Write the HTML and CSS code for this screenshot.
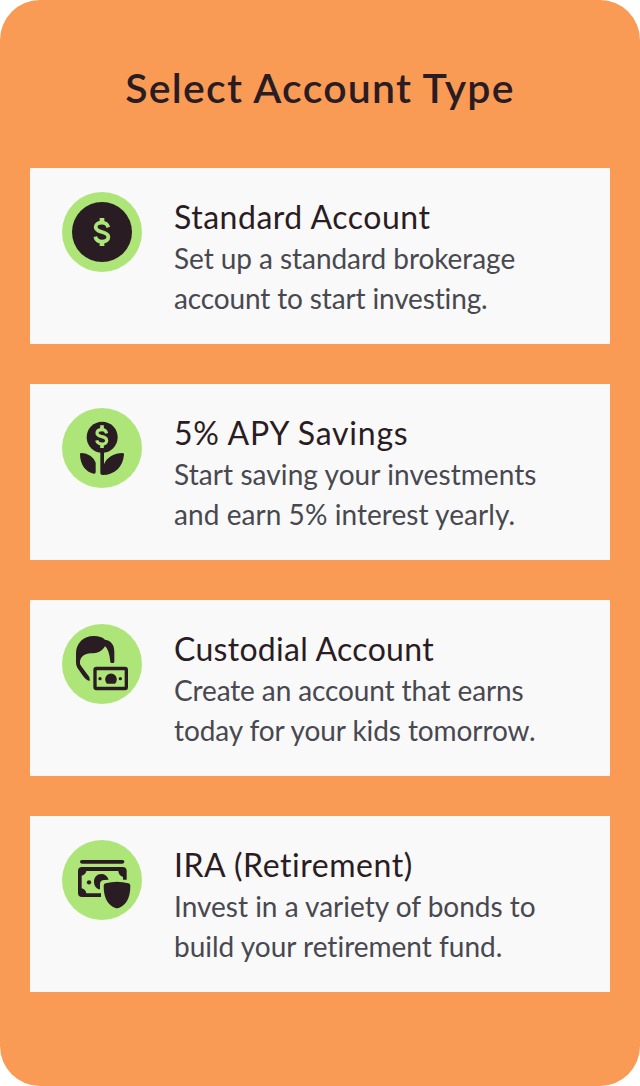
FILE: index.html
```html
<!DOCTYPE html>
<html lang="en">
<head>
<meta charset="utf-8">
<title>Select Account Type</title>
<link rel="stylesheet" href="styles.css">
</head>
<body>
<main class="panel">
  <h1 class="title">Select Account Type</h1>
  <div class="cards">
    <section class="card">
      <svg class="icon" viewBox="30 30 240 240" aria-hidden="true">
        <circle class="lime" cx="150" cy="150" r="120"/>
        <circle class="ink" cx="150" cy="150" r="90"/>
        <g class="line-lime">
          <path stroke-width="11.500" d="M169 136C166 126 160 122 150 122C139 122 131 127 131 135C131 144 139 147 150 150C162 153 169 156 169 165C169 174 161 179 150 179C139 179 132 174 130 164"/>
          <path stroke-width="14" d="M150 108V124M150 177V192"/>
        </g>
      </svg>
      <div class="copy">
        <h2 class="name n1">Standard Account</h2>
        <p class="text"><span class="a1">Set up a standard brokerage</span><br><span class="a2">account to start investing.</span></p>
      </div>
    </section>
    <section class="card">
      <svg class="icon" viewBox="30 30 240 240" aria-hidden="true">
        <circle class="lime" cx="150" cy="150" r="120"/>
        <circle class="ink" cx="150.500" cy="118" r="46.500"/>
        <path class="ink" d="M145 160H156V199C164 178 187 165 212 165Q217 165 216 170C213 206 188 231 152 231Q145 231 145 225Z"/>
        <path class="ink" d="M84 168Q84 165 88 165C108 166 125 177 131 194V222Q131 228 125 227C101 222 84 200 84 168Z"/>
        <g class="line-lime">
          <path stroke-width="9.500" d="M164 106C162 98 157 95 150 95C141 95 135 99 135 106C135 113 142 114 150 116C159 118 164 121 164 128C164 134 158 138 150 138C141 138 136 134 134 127"/>
          <path stroke-width="11" d="M150 82V96M150 137V150"/>
        </g>
      </svg>
      <div class="copy">
        <h2 class="name n2">5% APY Savings</h2>
        <p class="text"><span class="b1">Start saving your investments</span><br><span class="b2">and earn 5% interest yearly.</span></p>
      </div>
    </section>
    <section class="card">
      <svg class="icon" viewBox="30 30 240 240" aria-hidden="true">
        <circle class="lime" cx="150" cy="150" r="120"/>
        <path class="ink" d="M72 145V119C72 87 95 66 125 66C141 66 152 70 159 77C178 79 187 94 187 113V143Q187 147 183 147H178Q175 147 175 143C173 125 170 107 159 97C150 113 137 118 116 118C98 119 86 128 84 142Q82 149 88 157L108 184Q113 189 113 194V201C104 199 98 193 91 183L76 161Q72 155 72 145Z"/>
        <rect class="line-ink" x="129" y="163.500" width="94" height="60" rx="4" stroke-width="10"/>
        <path class="ink" d="M165 209A17.500 17.500 0 1 1 189 209Z"/>
        <circle class="ink" cx="144" cy="194" r="5"/>
        <circle class="ink" cx="205" cy="194" r="5"/>
      </svg>
      <div class="copy">
        <h2 class="name n3">Custodial Account</h2>
        <p class="text"><span class="c1">Create an account that earns</span><br><span class="c2">today for your kids tomorrow.</span></p>
      </div>
    </section>
    <section class="card">
      <svg class="icon" viewBox="30 30 240 240" aria-hidden="true">
        <circle class="lime" cx="150" cy="150" r="120"/>
        <rect class="ink" x="84" y="90" width="133" height="11" rx="5.500"/>
        <path class="ink" fill-rule="evenodd" d="M90 111H212Q224 111 224 123V149H213V141Q200 137 199 123H103Q101 134 89 137V175Q101 178 103 190H147V201H90Q78 201 78 189V123Q78 111 90 111Z"/>
        <circle class="ink" cx="111" cy="157" r="6.500"/>
        <path class="ink" d="M170 149C166 138 158 132 148 132C135 132 126 142 126 155C126 168 134 177 144 178V161Q145 150 157 150Z"/>
        <path class="ink" d="M155 167Q155 161 161 160Q195 150 229 160Q235 161 235 167C235 205 222 225 200 234Q195 236 190 234C168 225 155 205 155 167Z"/>
      </svg>
      <div class="copy">
        <h2 class="name n4">IRA (Retirement)</h2>
        <p class="text"><span class="d1">Invest in a variety of bonds to</span><br><span class="d2">build your retirement fund.</span></p>
      </div>
    </section>
  </div>
</main>
</body>
</html>
```
FILE: styles.css
```css
body {
  margin: 0;
  background: #fff;
}

.panel {
  box-sizing: border-box;
  height: 1086px;
  padding: 60px 30px 0;
  border-radius: 40px;
  background: #fa9b55;
  font-family: Lato, sans-serif;
  font-variant-ligatures: none;
  color: #2a1c23;
}

.title {
  margin: 0 0 52px;
  font-size: 41px;
  line-height: 56px;
  font-weight: 600;
  letter-spacing: 1.25px;
  text-align: center;
  white-space: nowrap;
}

.cards {
  display: flex;
  flex-direction: column;
  gap: 40px;
}

.card {
  box-sizing: border-box;
  display: flex;
  gap: 32px;
  height: 176px;
  padding: 24px 32px;
  background: #f9f9f9;
}

.icon {
  flex: none;
  width: 80px;
  height: 80px;
}

.copy {
  padding-top: 2px;
  white-space: nowrap;
}

.name {
  margin: 0;
  font-size: 32px;
  line-height: 46px;
  font-weight: 400;
}

.text {
  margin: -2px 0 0;
  font-size: 28px;
  line-height: 40px;
  color: #484850;
}

.n1 { letter-spacing: 0.52px; }
.n2 { letter-spacing: 0.75px; }
.n3 { letter-spacing: 0.3px; }
.n4 { letter-spacing: 0.55px; }
.a1 { letter-spacing: -0.06px; }
.a2 { letter-spacing: -0.14px; }
.b1 { letter-spacing: 0.08px; }
.b2 { letter-spacing: 0.06px; }
.c1 { letter-spacing: -0.12px; }
.c2 { letter-spacing: -0.08px; }

.lime {
  fill: #aee578;
}

.ink {
  fill: #2a1c23;
}

.line-lime {
  fill: none;
  stroke: #aee578;
}

.line-ink {
  fill: none;
  stroke: #2a1c23;
}
```
